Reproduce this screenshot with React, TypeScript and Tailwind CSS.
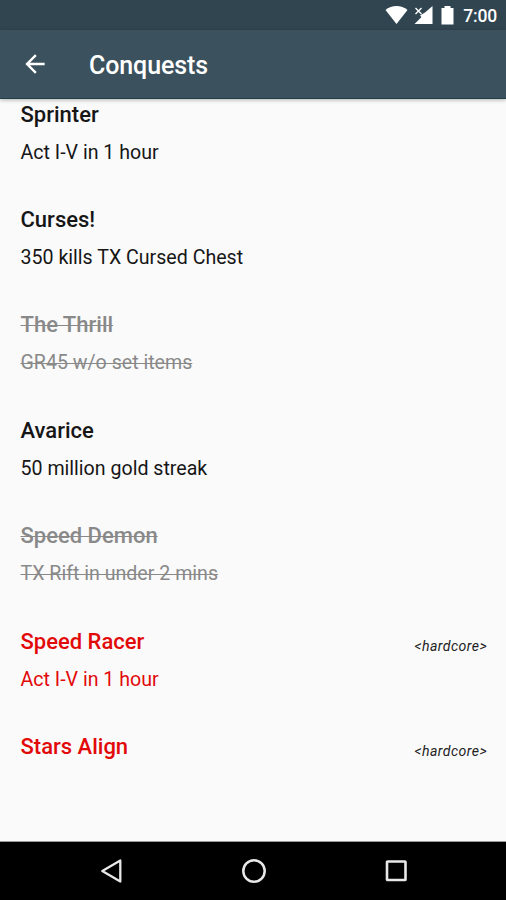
type Conquest = {
  name: string;
  detail?: string;
  done?: boolean;
  hardcore?: boolean;
};

const conquests: Conquest[] = [
  { name: 'Sprinter', detail: 'Act I-V in 1 hour' },
  { name: 'Curses!', detail: '350 kills TX Cursed Chest' },
  { name: 'The Thrill', detail: 'GR45 w/o set items', done: true },
  { name: 'Avarice', detail: '50 million gold streak' },
  { name: 'Speed Demon', detail: 'TX Rift in under 2 mins', done: true },
  { name: 'Speed Racer', detail: 'Act I-V in 1 hour', hardcore: true },
  { name: 'Stars Align', hardcore: true },
];

function StatusBar() {
  return (
    <div className="flex h-[30px] shrink-0 items-center justify-end bg-[#314550] pr-[9px] text-white">
      <svg className="h-[30px] w-[76px]" viewBox="0 0 76 30" fill="currentColor">
        <path d="M3.500 10C9.500 4.800 19.500 4.800 25.500 10L14.500 24Z" />
        <path d="M50.500 6V24H32.500L39.500 17L38 15.500L43 12.500Z" />
        <path d="M33.500 8L39.500 14M39.500 8L33.500 14" stroke="currentColor" strokeWidth="1.400" />
        <path d="M59.500 8H62.500V6H68.500V8H71.500V24.500H59.500Z" />
      </svg>
      <span className="ml-[5px] mt-[2px] text-[17.500px] font-medium leading-[30px] tracking-[-0.15px]">7:00</span>
    </div>
  );
}

function Toolbar() {
  return (
    <header className="relative z-10 flex h-[69px] shrink-0 items-center border-b border-[#1f3f4d] bg-[#3b525e] pl-[18px] text-white shadow-[0_1px_4px_rgba(0,0,0,0.3)]">
      <svg className="h-[34px] w-[34px]" viewBox="0 0 24 24" fill="currentColor">
        <path d="M20 11H7.830l5.590-5.590L12 4l-8 8 8 8 1.410-1.410L7.830 13H20v-2z" transform="translate(1.800 1.800) scale(.85)" />
      </svg>
      <h1 className="ml-[37px] mt-[4px] text-[25px] font-medium leading-[34px] tracking-[-0.1px]">Conquests</h1>
    </header>
  );
}

function Row({ name, detail, done, hardcore }: Conquest) {
  const tone = done ? 'text-[#898989] line-through decoration-1' : hardcore ? 'text-[#e20909]' : 'text-[#161616]';
  return (
    <li className="flex h-[105.4px] shrink-0 justify-between pl-[20.5px] pr-[19px]">
      <div className={tone}>
        <h2 className="text-[22px] font-medium leading-[30px]">{name}</h2>
        {detail && <p className="mt-[11px] text-[19.600px] leading-[24px]">{detail}</p>}
      </div>
      {hardcore && (
        <span className="mt-[9px] text-[14.100px] italic leading-[20px] tracking-[0.45px] text-[#222]">&lt;hardcore&gt;</span>
      )}
    </li>
  );
}

function NavBar() {
  return (
    <nav className="flex h-[58px] shrink-0 items-center justify-between bg-black pl-[97px] pr-[96px]">
      <svg className="h-[28px] w-[28px]" viewBox="0 0 28 28" fill="none" stroke="#e8e8e8" strokeWidth="2.300" strokeLinejoin="round">
        <path d="M23.300 3.500V24.500L5.300 14Z" />
      </svg>
      <svg className="h-[28px] w-[28px]" viewBox="0 0 28 28" fill="none" stroke="#e8e8e8" strokeWidth="2.500">
        <circle cx="14" cy="14" r="10.700" />
      </svg>
      <svg className="h-[28px] w-[28px]" viewBox="0 0 28 28" fill="none" stroke="#e8e8e8" strokeWidth="2.600">
        <rect x="5" y="4.500" width="18.500" height="18.500" rx=".6" />
      </svg>
    </nav>
  );
}

export default function App() {
  return (
    <div className="flex h-[900px] w-[506px] flex-col overflow-hidden bg-[#fafafa] font-[Roboto,sans-serif]">
      <StatusBar />
      <Toolbar />
      <ul className="flex min-h-0 flex-1 flex-col overflow-hidden border-b border-[#999] pt-[0.6px]">
        {conquests.map((c) => (
          <Row key={c.name} {...c} />
        ))}
      </ul>
      <NavBar />
    </div>
  );
}
